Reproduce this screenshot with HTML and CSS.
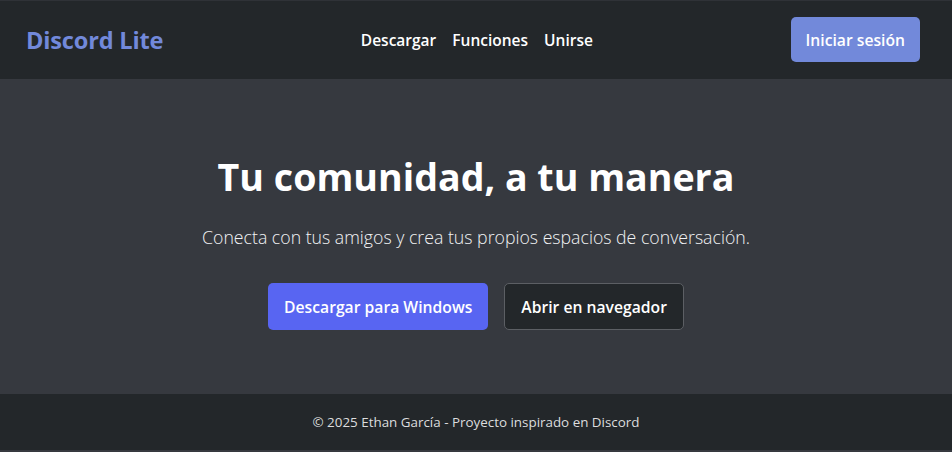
FILE: index.html
```html
<!DOCTYPE html>
<html lang="es">
<head>
<meta charset="utf-8">
<title>Discord Lite</title>
<link rel="stylesheet" href="styles.css">
</head>
<body>
<header class="topbar">
  <div class="logo">Discord Lite</div>
  <nav class="nav">
    <a class="nav-link" href="#">Descargar</a>
    <a class="nav-link" href="#">Funciones</a>
    <a class="nav-link" href="#">Unirse</a>
  </nav>
  <a class="btn btn-login" href="#">Iniciar sesión</a>
</header>
<main class="hero">
  <h1 class="hero-title">Tu comunidad, a tu manera</h1>
  <p class="hero-sub">Conecta con tus amigos y crea tus propios espacios de conversación.</p>
  <div class="hero-actions">
    <a class="btn btn-primary" href="#">Descargar para Windows</a>
    <a class="btn btn-dark" href="#">Abrir en navegador</a>
  </div>
</main>
<footer class="footer">© 2025 Ethan García - Proyecto inspirado en Discord</footer>
</body>
</html>
```
FILE: styles.css
```css
* { box-sizing: border-box; }
html, body { margin: 0; padding: 0; }
body {
  background: #36393f;
  color: #ffffff;
  font-family: "Open Sans", "Noto Sans", sans-serif;
}
a { text-decoration: none; color: inherit; }

.topbar {
  display: flex;
  align-items: center;
  justify-content: space-between;
  background: #23272a;
  border-top: 1px solid #2f3237;
  padding: 16px 32px 17px 26px;
}
.logo {
  color: #7289da;
  font-size: 23.6px;
  font-weight: 700;
  letter-spacing: -0.2px;
}
.nav {
  display: flex;
  gap: 16px;
}
.nav-link {
  color: #ffffff;
  font-size: 15.5px;
  font-weight: 600;
}
.btn {
  display: inline-flex;
  align-items: center;
  justify-content: center;
  border-radius: 5px;
  font-size: 15.7px;
  font-weight: 600;
  color: #ffffff;
  padding: 0 15px;
}
.btn-login {
  background: #7289da;
  height: 45px;
}
.hero {
  display: flex;
  flex-direction: column;
  align-items: center;
  padding: 71px 20px 64px;
}
.hero-title {
  margin: 0 0 21px;
  font-size: 37.6px;
  line-height: 53px;
  font-weight: 700;
}
.hero-sub {
  margin: 0 0 32px;
  font-size: 17.7px;
  line-height: 27px;
  font-weight: 300;
  color: #f2f3f5;
}
.hero-actions {
  display: flex;
  gap: 16px;
}
.hero-actions .btn {
  height: 47px;
  padding: 0 16px;
}
.btn-primary { background: #5865f2; }
.btn-dark {
  background: #23272a;
  border: 1px solid #5c5f64;
}
.footer {
  background: #23272a;
  color: #dcddde;
  text-align: center;
  font-size: 13.4px;
  line-height: 20px;
  padding: 18px 20px;
}
```
